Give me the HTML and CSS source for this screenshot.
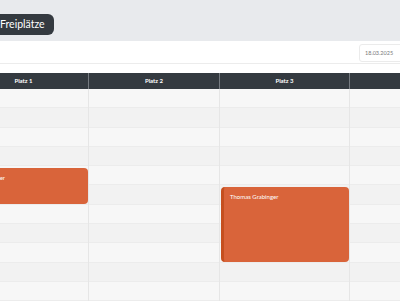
FILE: index.html
```html
<!DOCTYPE html>
<html lang="de">
<head>
  <meta charset="UTF-8">
  <meta name="viewport" content="width=device-width, initial-scale=1.0">
  <title>Freiplätze</title>
  <link rel="stylesheet" href="styles.css">
</head>
<body>
  <div class="page">
    <div class="topbar">
      <button class="btn-dark">Freiplätze</button>
    </div>

    <div class="toolbar">
      <div class="date-field">18.03.2025</div>
    </div>

    <div class="plan">
      <div class="plan-head">
        <div class="head-cell">Platz 1</div>
        <div class="head-cell">Platz 2</div>
        <div class="head-cell">Platz 3</div>
        <div class="head-cell"></div>
      </div>

      <div class="plan-body">
        <!-- row stripes -->
        <div class="stripes">
          <div class="stripe"></div><div class="stripe"></div><div class="stripe"></div>
          <div class="stripe"></div><div class="stripe"></div><div class="stripe"></div>
          <div class="stripe"></div><div class="stripe"></div><div class="stripe"></div>
          <div class="stripe"></div><div class="stripe"></div>
        </div>

        <!-- column lines -->
        <div class="col col-1"></div>
        <div class="col col-2"></div>
        <div class="col col-3"></div>
        <div class="col col-4"></div>

        <!-- bookings -->
        <div class="booking booking-a">Max Müller</div>
        <div class="booking booking-b">Thomas Grabinger</div>
      </div>
    </div>
  </div>
</body>
</html>
```

FILE: styles.css
```css
body {
  margin: 0;
  font-family: Lato, "Open Sans", sans-serif;
  background: #ffffff;
  overflow: hidden;
}
.page {
  width: 551px;
  margin-left: -41px;
}
.topbar {
  height: 41px;
  box-sizing: border-box;
  padding: 12px 0 0 32px;
  background-color: #e8eaed;
}
.btn-dark {
  height: 21px;
  padding: 0 9px;
  border: none;
  border-radius: 6px;
  background-color: #343a40;
  color: #ffffff;
  font-family: inherit;
  font-size: 10.5px;
  line-height: 21px;
}
.toolbar {
  height: 23px;
  box-sizing: border-box;
  padding: 3px 103px 0 0;
  display: flex;
  justify-content: flex-end;
  border-bottom: 1px solid #ececec;
  margin-bottom: 9px;
}
.date-field {
  width: 48px;
  height: 18px;
  box-sizing: border-box;
  padding-left: 5px;
  border: 1px solid #ebebeb;
  border-radius: 3px;
  color: #7a7a7a;
  font-size: 5.5px;
  line-height: 16px;
}
.plan-head {
  display: grid;
  grid-template-columns: 130px 131px 130px 160px;
  height: 16px;
  background-color: #343a40;
}
.head-cell {
  border-right: 1px solid #767b81;
  color: #ffffff;
  font-size: 6px;
  font-weight: bold;
  line-height: 16px;
  text-align: center;
}
.plan-body {
  display: grid;
  grid-template-columns: 130px 131px 130px 160px;
  grid-template-rows: repeat(11, 19.3px);
}
.stripes {
  grid-row: 1 / -1;
  grid-column: 1 / -1;
  display: flex;
  flex-direction: column;
}
.stripe {
  flex: 1;
  background-color: #f7f7f7;
  border-bottom: 1px solid #ececec;
}
.stripe:nth-child(even) {
  background-color: #f2f2f2;
}
.col {
  grid-row: 1 / -1;
  border-right: 1px solid #e6e6e6;
}
.col-1 { grid-column: 1; }
.col-2 { grid-column: 2; }
.col-3 { grid-column: 3; }
.col-4 { grid-column: 4; }
.booking {
  margin: 1.5px 1px 1px 1px;
  padding: 6px 6px 0 6px;
  border-left: 3px solid #c54f1f;
  border-radius: 4px;
  background-color: #d9643a;
  color: #ffffff;
  font-size: 6px;
  line-height: 8px;
}
.booking-a {
  grid-column: 1;
  grid-row: 5 / span 2;
  padding-left: 12px;
}
.booking-b {
  grid-column: 3;
  grid-row: 6 / span 4;
}
```
